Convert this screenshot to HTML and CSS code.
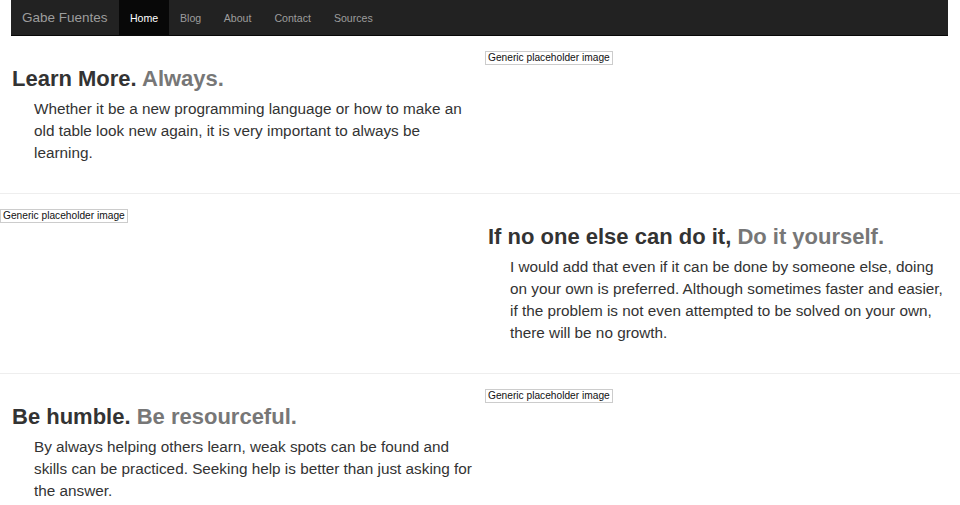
FILE: index.html
```html
<!DOCTYPE html>
<html>
<head>
<meta charset="utf-8">
<link rel="stylesheet" href="styles.css">
</head>
<body>
<nav class="navbar">
  <a class="brand">Gabe Fuentes</a>
  <ul class="nav">
    <li class="active"><a>Home</a></li>
    <li><a>Blog</a></li>
    <li><a>About</a></li>
    <li><a>Contact</a></li>
    <li><a>Sources</a></li>
  </ul>
</nav>

<section class="featurette f1">
  <div class="text">
    <h2>Learn More. <span class="muted">Always.</span></h2>
    <p>Whether it be a new programming language or how to make an<br>old table look new again, it is very important to always be<br>learning.</p>
  </div>
  <div class="media"><span class="ph">Generic placeholder image</span></div>
</section>
<hr class="divider">
<section class="featurette f2">
  <div class="media"><span class="ph">Generic placeholder image</span></div>
  <div class="text">
    <h2>If no one else can do it, <span class="muted">Do it yourself.</span></h2>
    <p>I would add that even if it can be done by someone else, doing<br>on your own is preferred. Although sometimes faster and easier,<br>if the problem is not even attempted to be solved on your own,<br>there will be no growth.</p>
  </div>
</section>
<hr class="divider">
<section class="featurette f3">
  <div class="text">
    <h2>Be humble. <span class="muted">Be resourceful.</span></h2>
    <p>By always helping others learn, weak spots can be found and<br>skills can be practiced. Seeking help is better than just asking for<br>the answer.</p>
  </div>
  <div class="media"><span class="ph">Generic placeholder image</span></div>
</section>
</body>
</html>
```
FILE: styles.css
```css
html, body {
  margin: 0;
  padding: 0;
  background: #fff;
  font-family: "Liberation Sans", Arial, sans-serif;
  color: #333;
}
.navbar {
  margin: 0 12px 0 11px;
  height: 36px;
  background: #222;
  display: flex;
  align-items: stretch;
  border-bottom: 1px solid #080808;
  box-sizing: border-box;
}
.brand {
  color: #9d9d9d;
  font-size: 13.5px;
  padding: 0 11px;
  display: flex;
  align-items: center;
  width: 86px;
}
.nav {
  list-style: none;
  margin: 0;
  padding: 0;
  display: flex;
}
.nav li {
  display: flex;
}
.nav li a {
  color: #9d9d9d;
  font-size: 10.6px;
  padding: 0 11px;
  display: flex;
  align-items: center;
}
.nav li:nth-child(n+3) a {
  padding: 0 11.5px;
}
.nav li.active a {
  background: #080808;
  color: #fff;
  width: 28px;
  justify-content: center;
}
.featurette {
  display: flex;
  padding-bottom: 29px;
}
.text {
  width: 473px;
  box-sizing: border-box;
  padding-left: 12px;
}
.f2 .text {
  padding-left: 6px;
  width: 478px;
}
.media {
  width: 475px;
  padding-top: 15px;
  padding-left: 12px;
  box-sizing: border-box;
}
.f2 .media {
  width: 482px;
  padding-left: 0;
}
.ph {
  display: block;
  width: max-content;
  font-size: 10.2px;
  line-height: 12px;
  border: 1px solid #ccc;
  padding: 0 2px;
  color: #111;
}
h2 {
  font-size: 22px;
  font-weight: bold;
  margin: 30px 0 0;
  line-height: 26px;
  color: #333;
}
.muted {
  color: #777;
}
p {
  margin: 6px 0 0 22px;
  font-size: 15.3px;
  line-height: 22px;
  color: #333;
  white-space: nowrap;
}
.divider {
  border: 0;
  border-top: 1px solid #eee;
  margin: 0;
}
```
